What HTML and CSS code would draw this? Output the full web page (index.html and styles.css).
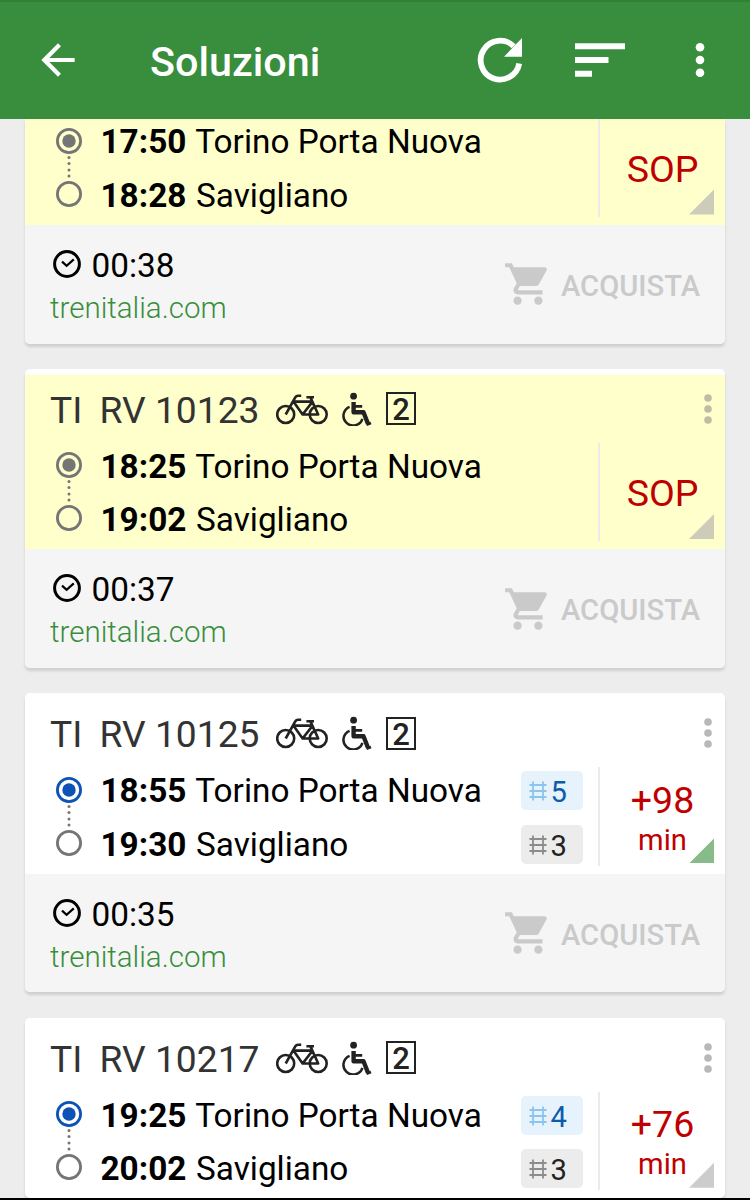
FILE: index.html
```html
<!DOCTYPE html>
<html lang="it">
<head>
    <meta charset="UTF-8">
    <meta name="viewport" content="width=device-width, initial-scale=1.0">
    <title>Soluzioni</title>
    <link rel="stylesheet" href="styles.css">
</head>
<body>
    <svg class="sprite" width="0" height="0">
        <symbol id="bike" viewBox="0 0 52 32">
            <g fill="none" stroke="currentColor" stroke-width="2.6">
                <circle cx="9.7" cy="21.5" r="8.5"/>
                <circle cx="42.2" cy="21.5" r="8.5"/>
                <path d="M9.7 21.5 L19.4 4.2 Q20.3 2.8 22 2.8 H25.2 M17.4 8.6 H36.4 M17.4 8.6 L26.6 21.5 L36.6 8.6 M26.6 21.5 H42.2 L34.4 4.4 M30.4 4.2 H38" stroke-linejoin="round"/>
            </g>
        </symbol>
        <symbol id="wheelchair" viewBox="0 0 30 34">
            <circle cx="11.6" cy="4.2" r="3.4" fill="currentColor"/>
            <path d="M11.6 10 V20.2 H21.5 L26 31.8" fill="none" stroke="currentColor" stroke-width="4.4" stroke-linejoin="round"/>
            <path d="M12 14.4 H20.2 M24.5 32.8 L29 31" fill="none" stroke="currentColor" stroke-width="2.6"/>
            <path d="M7.6 14.8 A9.7 9.7 0 1 0 20.4 26.8" fill="none" stroke="currentColor" stroke-width="2.5"/>
        </symbol>
        <symbol id="more" viewBox="0 0 10 32">
            <g fill="currentColor">
                <circle cx="5" cy="5" r="3.8"/>
                <circle cx="5" cy="16" r="3.8"/>
                <circle cx="5" cy="27" r="3.8"/>
            </g>
        </symbol>
        <symbol id="line" viewBox="0 0 26 80">
            <circle cx="13" cy="13" r="11.6" fill="none" stroke="currentColor" stroke-width="2.8"/>
            <circle cx="13" cy="13" r="6.7" fill="currentColor"/>
            <g fill="#757575">
                <circle cx="13" cy="29.4" r="1.5"/>
                <circle cx="13" cy="35.6" r="1.5"/>
                <circle cx="13" cy="41.9" r="1.5"/>
                <circle cx="13" cy="48.1" r="1.5"/>
            </g>
            <circle cx="13" cy="66" r="11.6" fill="none" stroke="#757575" stroke-width="2.8"/>
        </symbol>
        <symbol id="track" viewBox="0 0 18 20">
            <path d="M4 0.5 V19.5 M14 0.5 V19.5" stroke="currentColor" stroke-width="1.8"/>
            <path d="M0.5 4 H17.5 M0.5 10 H17.5 M0.5 16 H17.5" stroke="currentColor" stroke-width="1.8"/>
        </symbol>
        <symbol id="clock" viewBox="0 0 30 30">
            <circle cx="15" cy="15" r="12.4" fill="none" stroke="currentColor" stroke-width="3"/>
            <path d="M10 12.6 L14.6 16.8 L21.8 10.4" fill="none" stroke="currentColor" stroke-width="2.2"/>
        </symbol>
        <symbol id="cart" viewBox="0 0 24 24">
            <path fill="currentColor" d="M7 18c-1.1 0-1.99.9-1.99 2S5.9 22 7 22s2-.9 2-2-.9-2-2-2zM1 2v2h2l3.6 7.59-1.35 2.45c-.16.28-.25.61-.25.96 0 1.1.9 2 2 2h12v-2H7.42c-.14 0-.25-.11-.25-.25l.03-.12.9-1.63h7.45c.75 0 1.41-.41 1.75-1.03l3.58-6.49c.08-.14.12-.31.12-.48 0-.55-.45-1-1-1H5.21l-.94-2H1zm16 16c-1.1 0-1.99.9-1.99 2s.89 2 1.99 2 2-.9 2-2-.9-2-2-2z"/>
        </symbol>
    </svg>

    <header class="toolbar">
        <svg class="back" viewBox="0 0 24 24"><path fill="currentColor" d="M20 11H7.83l5.59-5.59L12 4l-8 8 8 8 1.41-1.41L7.83 13H20v-2z"/></svg>
        <h1>Soluzioni</h1>
        <svg class="refresh" viewBox="0 0 46 46">
            <path d="M42.2 26.5 A19.4 19.4 0 1 1 36.7 9.3" fill="none" stroke="currentColor" stroke-width="5.8"/>
            <path d="M45 1 V19.8 H27 Z" fill="currentColor"/>
        </svg>
        <svg class="sort" viewBox="0 0 50 34"><path fill="currentColor" d="M0 0.3h50v6H0zM0 14h33.5v6H0zM0 27.7h17v6H0z"/></svg>
        <svg class="overflow" viewBox="0 0 10 36">
            <g fill="currentColor">
                <circle cx="5" cy="5.3" r="4.3"/>
                <circle cx="5" cy="18" r="4.3"/>
                <circle cx="5" cy="30.7" r="4.3"/>
            </g>
        </svg>
    </header>

    <main class="list">
        <article class="card card-first">
            <div class="info cancelled">
                <div class="route">
                    <svg class="line"><use href="#line"/></svg>
                    <div class="stops">
                        <p class="stop"><b>17:50</b> Torino Porta Nuova</p>
                        <p class="stop"><b>18:28</b> Savigliano</p>
                    </div>
                    <div class="status"><span class="big">SOP</span></div>
                </div>
            </div>
            <div class="footer">
                <div class="details">
                    <div class="duration"><svg><use href="#clock"/></svg>00:38</div>
                    <div class="site">trenitalia.com</div>
                </div>
                <div class="buy"><svg><use href="#cart"/></svg>ACQUISTA</div>
            </div>
        </article>

        <article class="card">
            <div class="info cancelled">
                <div class="train">
                    <span class="company">TI</span>
                    <span class="number">RV 10123</span>
                    <svg class="bike"><use href="#bike"/></svg>
                    <svg class="wheelchair"><use href="#wheelchair"/></svg>
                    <span class="class">2</span>
                    <svg class="more"><use href="#more"/></svg>
                </div>
                <div class="route">
                    <svg class="line"><use href="#line"/></svg>
                    <div class="stops">
                        <p class="stop"><b>18:25</b> Torino Porta Nuova</p>
                        <p class="stop"><b>19:02</b> Savigliano</p>
                    </div>
                    <div class="status"><span class="big">SOP</span></div>
                </div>
            </div>
            <div class="footer">
                <div class="details">
                    <div class="duration"><svg><use href="#clock"/></svg>00:37</div>
                    <div class="site">trenitalia.com</div>
                </div>
                <div class="buy"><svg><use href="#cart"/></svg>ACQUISTA</div>
            </div>
        </article>

        <article class="card">
            <div class="info">
                <div class="train">
                    <span class="company">TI</span>
                    <span class="number">RV 10125</span>
                    <svg class="bike"><use href="#bike"/></svg>
                    <svg class="wheelchair"><use href="#wheelchair"/></svg>
                    <span class="class">2</span>
                    <svg class="more"><use href="#more"/></svg>
                </div>
                <div class="route">
                    <svg class="line active"><use href="#line"/></svg>
                    <div class="stops">
                        <p class="stop"><b>18:55</b> Torino Porta Nuova</p>
                        <p class="stop"><b>19:30</b> Savigliano</p>
                    </div>
                    <div class="platforms">
                        <div class="platform confirmed"><svg><use href="#track"/></svg>5</div>
                        <div class="platform"><svg><use href="#track"/></svg>3</div>
                    </div>
                    <div class="status live"><span class="big">+98</span><span class="small">min</span></div>
                </div>
            </div>
            <div class="footer">
                <div class="details">
                    <div class="duration"><svg><use href="#clock"/></svg>00:35</div>
                    <div class="site">trenitalia.com</div>
                </div>
                <div class="buy"><svg><use href="#cart"/></svg>ACQUISTA</div>
            </div>
        </article>

        <article class="card">
            <div class="info">
                <div class="train">
                    <span class="company">TI</span>
                    <span class="number">RV 10217</span>
                    <svg class="bike"><use href="#bike"/></svg>
                    <svg class="wheelchair"><use href="#wheelchair"/></svg>
                    <span class="class">2</span>
                    <svg class="more"><use href="#more"/></svg>
                </div>
                <div class="route">
                    <svg class="line active"><use href="#line"/></svg>
                    <div class="stops">
                        <p class="stop"><b>19:25</b> Torino Porta Nuova</p>
                        <p class="stop"><b>20:02</b> Savigliano</p>
                    </div>
                    <div class="platforms">
                        <div class="platform confirmed"><svg><use href="#track"/></svg>4</div>
                        <div class="platform"><svg><use href="#track"/></svg>3</div>
                    </div>
                    <div class="status"><span class="big">+76</span><span class="small">min</span></div>
                </div>
            </div>
        </article>
    </main>
</body>
</html>
```
FILE: styles.css
```css
* {
    box-sizing: border-box;
}

body {
    margin: 0;
    height: 1200px;
    display: flex;
    flex-direction: column;
    overflow: hidden;
    background: #ededed;
    border-bottom: 2px solid #000;
    font-family: Roboto, sans-serif;
    color: #000;
}

svg {
    flex: none;
    display: block;
}

.sprite {
    position: absolute;
}

.toolbar {
    flex: none;
    display: flex;
    align-items: center;
    height: 118.6px;
    padding: 0 45px 0 33px;
    border-top: 2px solid #327f36;
    background: #388e3c;
    color: #fff;
}

.toolbar h1 {
    flex: 1;
    margin: 0 0 0 67px;
    padding-top: 4px;
    font-size: 41.3px;
    font-weight: 500;
    line-height: 50px;
}

.back {
    width: 50px;
    height: 50px;
}

.refresh {
    width: 46px;
    height: 46px;
}

.sort {
    width: 50px;
    height: 34px;
    margin-left: 52px;
}

.overflow {
    width: 10px;
    height: 36px;
    margin-left: 70px;
}

.list {
    flex: 1;
    min-height: 0;
    padding: 0 25px;
    overflow: hidden;
}

.card {
    margin-bottom: 25.4px;
    padding-top: 6px;
    border-radius: 5px;
    background: #fff;
    box-shadow: 0 3px 3px rgba(0, 0, 0, 0.13);
}

.card-first {
    padding-top: 0;
    border-radius: 0 0 5px 5px;
}

.cancelled {
    background: #ffffcc;
}

.train {
    display: flex;
    align-items: center;
    height: 68px;
    padding: 0 12px 0 25px;
    font-size: 37.2px;
    color: #333;
}

.company,
.number {
    padding-top: 2px;
}

.company {
    width: 49.5px;
}

.number {
    width: 176.5px;
    white-space: nowrap;
}

.bike {
    width: 52px;
    height: 32px;
}

.wheelchair {
    width: 30px;
    height: 34px;
    margin-left: 14px;
}

.class {
    width: 30px;
    height: 33px;
    margin: 0 auto 0 14px;
    border: 2px solid #222;
    font-size: 31px;
    font-weight: 500;
    line-height: 31px;
    text-align: center;
    color: #222;
}

.bike,
.wheelchair {
    color: #222;
}

.more {
    width: 10px;
    height: 32px;
    color: #b8b8b8;
}

.cancelled .more {
    color: #bdbda5;
}

.route {
    display: flex;
    height: 106.5px;
    padding-left: 31px;
}

.line {
    width: 26px;
    height: 80px;
    margin-top: 9.5px;
    color: #757575;
}

.line.active {
    color: #0d53b5;
}

.stops,
.platforms {
    display: flex;
    flex-direction: column;
    gap: 14.4px;
    padding-top: 3.8px;
}

.stops {
    flex: 1;
    padding-left: 18.5px;
}

.stop {
    margin: 0;
    font-size: 33.33px;
    line-height: 39px;
    white-space: nowrap;
}

.stop b {
    margin-right: 1.3px;
}

.platforms {
    margin-right: 15px;
}

.platform {
    display: flex;
    align-items: center;
    gap: 3.5px;
    width: 62px;
    height: 39px;
    padding: 3px 0 0 8px;
    border-radius: 5px;
    background: #ececec;
    font-size: 29.17px;
    line-height: 36px;
    color: #222;
}

.platform svg {
    width: 18px;
    height: 20px;
    margin-top: -2px;
    color: #8c8c8c;
}

.platform.confirmed {
    background: #e6f2fc;
    color: #0d5cab;
}

.platform.confirmed svg {
    color: #8cc4f0;
}

.status {
    position: relative;
    display: flex;
    flex-direction: column;
    align-items: center;
    justify-content: center;
    width: 127px;
    height: 98.5px;
    padding-top: 2px;
    border-left: 2px solid #ebebeb;
    color: #bf0000;
}

.status::after {
    content: "";
    position: absolute;
    right: 11px;
    bottom: 2.5px;
    width: 25px;
    height: 25px;
    background: #cccccc;
    clip-path: polygon(100% 0, 100% 100%, 0 100%);
}

.cancelled .status::after {
    background: #ccccb8;
}

.status.live::after {
    background: #88bb8a;
}

.big {
    font-size: 37.5px;
    line-height: 44px;
}

.small {
    font-size: 29.17px;
    line-height: 36px;
}

.footer {
    display: flex;
    align-items: center;
    justify-content: space-between;
    height: 118.5px;
    padding: 3px 25px 0;
    border-radius: 0 0 5px 5px;
    background: #f5f5f5;
}

.details {
    padding-top: 2px;
}

.duration {
    display: flex;
    align-items: center;
    gap: 10px;
    font-size: 33.33px;
    line-height: 42px;
}

.duration svg {
    width: 30px;
    height: 30px;
    margin: -4px 0 0 1.5px;
}

.site {
    font-size: 29.5px;
    font-weight: 300;
    line-height: 42px;
    color: #388e3c;
}

.buy {
    display: flex;
    align-items: center;
    gap: 8px;
    font-size: 29.17px;
    font-weight: 500;
    color: #cacaca;
}

.buy svg {
    width: 50px;
    height: 50px;
    margin-top: -3px;
}
```
